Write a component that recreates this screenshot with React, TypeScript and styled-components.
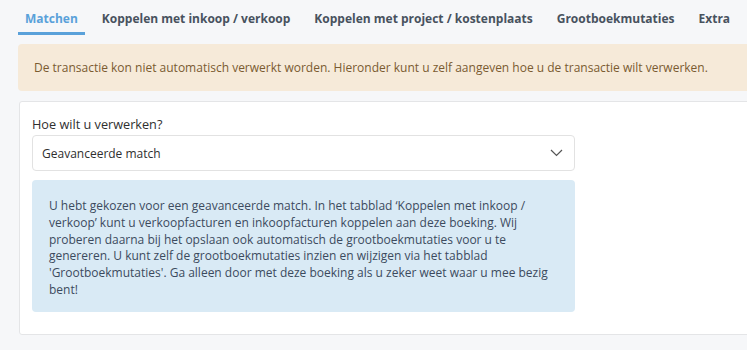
import styled, { createGlobalStyle } from "styled-components";

const GlobalStyle = createGlobalStyle`
  body {
    margin: 0;
    background: #f6f7f9;
    font-family: "Open Sans", "Liberation Sans", sans-serif;
    font-size: 12px;
    color: #333;
  }
`;

const tabs = [
  "Matchen",
  "Koppelen met inkoop / verkoop",
  "Koppelen met project / kostenplaats",
  "Grootboekmutaties",
  "Extra",
];

export default function App() {
  return (
    <Page>
      <GlobalStyle />
      <TabBar>
        {tabs.map((tab, i) => (
          <Tab key={tab} $active={i === 0}>
            {tab}
          </Tab>
        ))}
      </TabBar>
      <Warning>
        De transactie kon niet automatisch verwerkt worden. Hieronder kunt u zelf aangeven hoe u de
        transactie wilt verwerken.
      </Warning>
      <Card>
        <Label>Hoe wilt u verwerken?</Label>
        <Select>
          <span>Geavanceerde match</span>
          <svg width="13" height="8" viewBox="0 0 13 8" fill="none">
            <path d="M1 1l5.5 5.5L12 1" stroke="#555" strokeWidth="1.2" />
          </svg>
        </Select>
        <Info>
          U hebt gekozen voor een geavanceerde match. In het tabblad ‘Koppelen met inkoop /
          verkoop’ kunt u verkoopfacturen en inkoopfacturen koppelen aan deze boeking. Wij
          proberen daarna bij het opslaan ook automatisch de grootboekmutaties voor u te
          genereren. U kunt zelf de grootboekmutaties inzien en wijzigen via het tabblad
          'Grootboekmutaties'. Ga alleen door met deze boeking als u zeker weet waar u mee bezig
          bent!
        </Info>
      </Card>
    </Page>
  );
}

const Page = styled.div`
  padding: 0 0 0 18px;
  display: flex;
  flex-direction: column;
  overflow: hidden;
`;

const TabBar = styled.nav`
  display: flex;
  gap: 10px;
  white-space: nowrap;
`;

const Tab = styled.div<{ $active?: boolean }>`
  padding: 10px 7px 5px;
  line-height: 17px;
  font-weight: 700;
  font-size: 12px;
  color: ${(p) => (p.$active ? "#5aa1da" : "#48525e")};
  border-bottom: 3px solid ${(p) => (p.$active ? "#5aa1da" : "transparent")};
`;

const Warning = styled.div`
  margin-top: 9px;
  margin-right: -10px;
  padding: 15px 16px;
  background: #f6ead9;
  color: #7a5b31;
  border-radius: 4px;
  white-space: nowrap;
  line-height: 17px;
`;

const Card = styled.div`
  margin-top: 10px;
  margin-left: 1px;
  margin-right: -10px;
  height: 234px;
  box-sizing: border-box;
  background: #fff;
  border: 1px solid #e4e5e7;
  border-radius: 3px;
  padding: 13px 12px;
`;

const Label = styled.div`
  font-size: 12.7px;
  color: #2f2f2f;
  line-height: 18px;
  margin-bottom: 2px;
`;

const Select = styled.div`
  width: 543px;
  height: 36px;
  box-sizing: border-box;
  display: flex;
  align-items: center;
  justify-content: space-between;
  padding: 0 11px 0 9px;
  border: 1px solid #e2e2e2;
  border-radius: 4px;
  color: #2f2f2f;
`;

const Info = styled.div`
  width: 543px;
  box-sizing: border-box;
  margin-top: 9px;
  padding: 18px 16px 13px 17px;
  background: #d9eaf5;
  color: #3c4a5e;
  border-radius: 4px;
  line-height: 16.8px;
`;
